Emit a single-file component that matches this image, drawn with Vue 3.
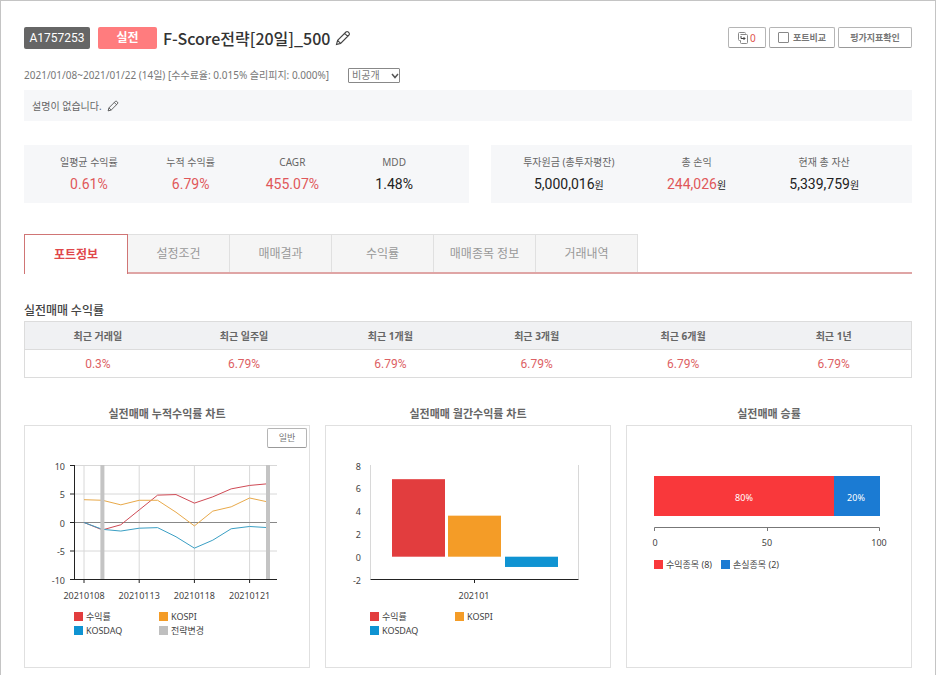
<script setup>
import { ref } from 'vue'

const visibility = ref('비공개')
const compare = ref(false)
const activeTab = ref(0)

const profitStats = [
  { label: '일평균 수익률', value: '0.61%', up: true },
  { label: '누적 수익률', value: '6.79%', up: true },
  { label: 'CAGR', value: '455.07%', up: true },
  { label: 'MDD', value: '1.48%' },
]

const assetStats = [
  { label: '투자원금 (총투자평잔)', value: '5,000,016' },
  { label: '총 손익', value: '244,026', up: true },
  { label: '현재 총 자산', value: '5,339,759' },
]

const tabs = ['포트정보', '설정조건', '매매결과', '수익률', '매매종목 정보', '거래내역']

const periods = [
  { label: '최근 거래일', value: '0.3%' },
  { label: '최근 일주일', value: '6.79%' },
  { label: '최근 1개월', value: '6.79%' },
  { label: '최근 3개월', value: '6.79%' },
  { label: '최근 6개월', value: '6.79%' },
  { label: '최근 1년', value: '6.79%' },
]

// line chart
const lineX = (i) => 59 + i * 18.4
const lineY = (v) => 96.5 - v * 5.7
const toPoints = (values) => values.map((v, i) => `${lineX(i)},${lineY(v)}`).join(' ')

const lines = [
  { color: '#cf4a55', values: [0, -1.3, -0.4, 2.2, 4.8, 4.9, 3.4, 4.5, 5.9, 6.5, 6.8] },
  { color: '#e8a94a', values: [4, 3.9, 3.1, 3.9, 3.9, 1.8, -0.6, 2, 2.75, 4.3, 3.6] },
  { color: '#3a9fc4', values: [0, -1.2, -1.5, -1, -0.9, -2.5, -4.5, -3.1, -1.1, -0.7, -0.9] },
]
const lineTicks = [10, 5, 0, -5, -10]
const dates = [
  { index: 0, text: '20210108' },
  { index: 3, text: '20210113' },
  { index: 6, text: '20210118' },
  { index: 9, text: '20210121' },
]
const changes = [1, 10]
const lineLegend = [
  { x: 49, y: 186, color: '#e23d3e', text: '수익률' },
  { x: 134, y: 186, color: '#f49c27', text: 'KOSPI' },
  { x: 49, y: 200, color: '#0f93d2', text: 'KOSDAQ' },
  { x: 134, y: 200, color: '#bfbfbf', text: '전략변경' },
]

// monthly bar chart
const barY = (v) => 130.7 - v * 11.4
const barTicks = [8, 6, 4, 2, 0, -2]
const bars = [
  { x: 66, value: 6.8, color: '#e23d3e' },
  { x: 122, value: 3.6, color: '#f49c27' },
  { x: 179, value: -0.9, color: '#0f93d2' },
]
const barLegend = [
  { x: 44, y: 186, color: '#e23d3e', text: '수익률' },
  { x: 129, y: 186, color: '#f49c27', text: 'KOSPI' },
  { x: 44, y: 200, color: '#0f93d2', text: 'KOSDAQ' },
]

const winLegend = [
  { x: 27, y: 134, color: '#f9383b', text: '수익종목 (8)' },
  { x: 94, y: 134, color: '#1b7bd3', text: '손실종목 (2)' },
]
</script>


<template>
  <main class="page">
    <header class="head">
      <span class="badge code">A1757253</span>
      <span class="badge real">실전</span>
      <h1>F-Score전략[20일]_500</h1>
      <button class="edit" type="button" aria-label="이름 수정">
        <svg width="16" height="16" viewBox="0 0 16 16">
          <path d="M1.5 14.5 2.6 10.4 11 2Q12 1 13.2 2L14 2.8Q15 4 14 5L5.6 13.4ZM2.6 10.4 5.6 13.4M9.7 3.3 12.7 6.3" />
        </svg>
      </button>
      <div class="actions">
        <button class="btn copy" type="button">
          <svg width="10" height="12" viewBox="0 0 10 12">
            <path d="M2.5 8.5H1.5Q.5 8.5 .5 7.5V1.5Q.5 .5 1.5 .5H6.5Q7.5 .5 7.5 1.5" />
            <path d="M2.5 8.5V10.5Q2.5 11.5 3.5 11.5H8.5Q9.5 11.5 9.5 10.5V3.5Q9.5 2.5 8.5 2.5H2.5" />
            <path class="arrow" d="M3 4V6.5H7M5.5 5 7 6.5 5.5 8" />
          </svg>
          <span class="count">0</span>
        </button>
        <label class="btn">
          <input v-model="compare" type="checkbox">
          <span>포트비교</span>
        </label>
        <button class="btn wide" type="button">평가지표확인</button>
      </div>
    </header>

    <div class="meta">
      <p>2021/01/08~2021/01/22 (14일) [수수료율: 0.015% 슬리피지: 0.000%]</p>
      <div class="select">
        <select v-model="visibility" aria-label="공개 여부">
          <option>비공개</option>
          <option>공개</option>
        </select>
        <svg width="8" height="6" viewBox="0 0 8 6"><path d="M1 1 4 4.5 7 1" /></svg>
      </div>
    </div>

    <div class="desc">
      <p>설명이 없습니다.</p>
      <button class="edit" type="button" aria-label="설명 수정">
        <svg width="12" height="12" viewBox="0 0 16 16">
          <path d="M1.5 14.5 2.6 10.4 11 2Q12 1 13.2 2L14 2.8Q15 4 14 5L5.6 13.4ZM2.6 10.4 5.6 13.4M9.7 3.3 12.7 6.3" />
        </svg>
      </button>
    </div>

    <section class="summary">
      <dl class="stats">
        <div v-for="item in profitStats" :key="item.label">
          <dt>{{ item.label }}</dt>
          <dd :class="{ up: item.up }">{{ item.value }}</dd>
        </div>
      </dl>
      <dl class="stats">
        <div v-for="item in assetStats" :key="item.label">
          <dt>{{ item.label }}</dt>
          <dd :class="{ up: item.up }">{{ item.value }}<small>원</small></dd>
        </div>
      </dl>
    </section>

    <nav class="tabs">
      <button
        v-for="(tab, i) in tabs"
        :key="tab"
        type="button"
        :class="{ active: activeTab === i }"
        @click="activeTab = i"
      >{{ tab }}</button>
    </nav>

    <section>
      <h2>실전매매 수익률</h2>
      <table>
        <thead>
          <tr>
            <th v-for="item in periods" :key="item.label" scope="col">{{ item.label }}</th>
          </tr>
        </thead>
        <tbody>
          <tr>
            <td v-for="item in periods" :key="item.label">{{ item.value }}</td>
          </tr>
        </tbody>
      </table>
    </section>

    <section class="charts">
      <div class="chart">
        <h3>실전매매 누적수익률 차트</h3>
        <div class="card">
          <button class="btn mode" type="button">일반</button>
          <svg viewBox="0 0 284 241">
            <g class="grid">
              <path v-for="v in [10, 5, -5]" :key="v" :d="`M50 ${lineY(v)}H252`" />
              <path v-for="d in dates" :key="d.text" :d="`M${lineX(d.index)} 39V153`" />
            </g>
            <path class="zero" d="M50 96.5H252" />
            <polyline
              v-for="line in lines"
              :key="line.color"
              class="line"
              :points="toPoints(line.values)"
              :stroke="line.color"
            />
            <rect v-for="i in changes" :key="i" class="change" :x="lineX(i) - 2" y="39" width="4" height="115" />
            <path class="axis" d="M49.5 39V153.5H252" />
            <path v-for="v in lineTicks" :key="v" class="axis" :d="`M45 ${lineY(v)}H50`" />
            <path v-for="d in dates" :key="d.text" class="axis" :d="`M${lineX(d.index)} 153V157`" />
            <text v-for="v in lineTicks" :key="v" class="end" x="40" :y="lineY(v) + 4">{{ v }}</text>
            <text v-for="d in dates" :key="d.text" class="mid" :x="lineX(d.index)" y="173">{{ d.text }}</text>
            <g v-for="item in lineLegend" :key="item.text">
              <rect :x="item.x" :y="item.y" width="9" height="9" :fill="item.color" />
              <text :x="item.x + 12" :y="item.y + 8">{{ item.text }}</text>
            </g>
          </svg>
        </div>
      </div>

      <div class="chart">
        <h3>실전매매 월간수익률 차트</h3>
        <div class="card">
          <svg viewBox="0 0 284 241">
            <path class="grid" d="M44.5 39V153M252.5 39V153" />
            <rect
              v-for="bar in bars"
              :key="bar.x"
              :x="bar.x"
              :y="barY(Math.max(bar.value, 0))"
              width="53"
              :height="Math.abs(bar.value) * 11.4"
              :fill="bar.color"
            />
            <path class="axis" d="M44.5 153.5H252.5M148.5 153V157" />
            <text v-for="v in barTicks" :key="v" class="end" x="35" :y="barY(v) + 4">{{ v }}</text>
            <text class="mid" x="148" y="173">202101</text>
            <g v-for="item in barLegend" :key="item.text">
              <rect :x="item.x" :y="item.y" width="9" height="9" :fill="item.color" />
              <text :x="item.x + 12" :y="item.y + 8">{{ item.text }}</text>
            </g>
          </svg>
        </div>
      </div>

      <div class="chart">
        <h3>실전매매 승률</h3>
        <div class="card">
          <svg viewBox="0 0 284 241">
            <rect x="27" y="50" width="180" height="40" fill="#f9383b" />
            <rect x="207" y="50" width="46" height="40" fill="#1b7bd3" />
            <text class="mid inner" x="117" y="75">80%</text>
            <text class="mid inner" x="229" y="75">20%</text>
            <path class="scale" d="M27.5 105V101.5H252.5V105M140.5 101V105" />
            <text class="mid" x="28" y="120">0</text>
            <text class="mid" x="140" y="120">50</text>
            <text class="mid" x="252" y="120">100</text>
            <g v-for="item in winLegend" :key="item.text">
              <rect :x="item.x" :y="item.y" width="9" height="9" :fill="item.color" />
              <text :x="item.x + 12" :y="item.y + 8">{{ item.text }}</text>
            </g>
          </svg>
        </div>
      </div>
    </section>
  </main>
</template>


<style>
body {
  margin: 0;
  background: white;
}
</style>

<style scoped>
* {
  box-sizing: border-box;
}

.page {
  min-height: 100vh;
  padding: 26px 23px 7px;
  border: 1px solid #c4c4c4;
  border-bottom: 0;
  color: #666;
  font-family: "Noto Sans", "Noto Sans CJK KR", sans-serif;
  font-size: 10px;
  line-height: 16px;
}

h1,
h2,
h3,
p,
dl,
dd {
  margin: 0;
}

button,
select {
  font: inherit;
  color: inherit;
}

.head {
  display: flex;
  align-items: center;
  height: 22px;
}

.badge {
  display: flex;
  align-items: center;
  justify-content: center;
  height: 22px;
  margin-right: 8px;
  border-radius: 2px;
  color: white;
}

.code {
  width: 66px;
  background: #666;
  font-family: Roboto, sans-serif;
  font-size: 12px;
}

.real {
  width: 59px;
  margin-right: 6px;
  background: #ff7c7e;
  font-size: 12px;
  font-weight: 700;
}

h1 {
  color: #333;
  font-family: "Noto Sans CJK KR", sans-serif;
  font-size: 16px;
  font-weight: 500;
  line-height: 20px;
}

.edit {
  display: flex;
  margin-left: 5px;
  padding: 0;
  border: 0;
  background: none;
}

.edit path {
  fill: none;
  stroke: #444;
  stroke-width: 1.1;
}

.actions {
  display: flex;
  align-self: flex-start;
  gap: 3px;
  margin-left: auto;
}

.btn {
  display: flex;
  align-items: center;
  justify-content: center;
  gap: 4px;
  height: 21px;
  padding: 0 8px;
  border: 1px solid #b5b5b5;
  border-bottom-color: #999;
  border-radius: 2px;
  background: white;
  color: #777;
  font-size: 9px;
  font-weight: 700;
}

.copy {
  width: 38px;
  gap: 2px;
}

.copy path {
  fill: none;
  stroke: #888;
}

.copy .arrow {
  stroke: #444;
}

.count {
  color: #e0524f;
  font-size: 10px;
  font-weight: 400;
}

.btn input {
  appearance: none;
  width: 11px;
  height: 11px;
  margin: 0;
  border: 1px solid #888;
  border-radius: 1px;
}

.btn input:checked {
  background: #888;
}

.wide {
  width: 74px;
}

.meta {
  display: flex;
  align-items: center;
  gap: 19px;
  height: 16px;
  margin-top: 18px;
  color: #777;
}

.select {
  position: relative;
}

select {
  display: block;
  appearance: none;
  width: 52px;
  height: 15px;
  padding: 0 3px;
  border: 1px solid #888;
  border-radius: 1px;
  background: white;
  line-height: 13px;
}

.select svg {
  position: absolute;
  top: 5px;
  right: 1px;
  pointer-events: none;
}

.select path {
  fill: none;
  stroke: #555;
  stroke-width: 1.5;
}

.desc {
  display: flex;
  align-items: center;
  height: 31px;
  margin-top: 7px;
  padding: 0 8px;
  background: #f6f7f9;
}

.summary {
  display: grid;
  grid-template-columns: 445fr 421fr;
  gap: 22px;
  margin-top: 24px;
}

.stats {
  display: flex;
  padding: 9px 24px 8px 14px;
  background: #f6f7f9;
  text-align: center;
}

.stats div {
  flex: 1;
}

.stats dd {
  margin-top: 3px;
  color: #222;
  font-family: Roboto, "Noto Sans CJK KR", sans-serif;
  font-size: 14px;
  line-height: 22px;
}

.stats small {
  font-size: 10px;
  line-height: 16px;
}

.stats .up {
  color: #e0575a;
}

.up small {
  color: #222;
}

.tabs {
  display: flex;
  height: 40px;
  margin-top: 31px;
  border-bottom: 2px solid #dfa5a5;
}

.tabs button {
  width: 102px;
  height: 38px;
  padding: 0;
  border: 1px solid #e0e0e0;
  border-width: 1px 1px 0 0;
  background: #f5f5f5;
  color: #999;
  font-size: 12px;
}

.tabs .active {
  width: 104px;
  height: 40px;
  border: 1px solid #d07575;
  border-bottom: 0;
  background: white;
  color: #e0474b;
  font-weight: 700;
}

h2 {
  margin-top: 27px;
  color: #444;
  font-family: "Noto Sans CJK KR", sans-serif;
  font-size: 12px;
  font-weight: 500;
  line-height: 18px;
}

table {
  width: 100%;
  margin-top: 2px;
  border: 1px solid #dcdcdc;
  border-collapse: collapse;
  table-layout: fixed;
}

th,
td {
  height: 28px;
  padding: 0;
  text-align: center;
}

th {
  background: #f0f1f3;
  border-bottom: 1px solid #dcdcdc;
  font-weight: 700;
}

th:last-child {
  width: 17.5%;
}

td {
  color: #dd6164;
  font-family: Roboto, sans-serif;
  font-size: 12px;
}

.charts {
  display: grid;
  grid-template-columns: repeat(3, 1fr);
  gap: 15px;
  margin-top: 27px;
}

h3 {
  color: #666;
  font-size: 11px;
  font-weight: 700;
  line-height: 18px;
  text-align: center;
}

.card {
  position: relative;
  margin-top: 2px;
  border: 1px solid #e0e0e0;
}

.card svg {
  display: block;
  width: 100%;
}

.mode {
  position: absolute;
  top: 2px;
  right: 2px;
  width: 40px;
  height: 20px;
  font-weight: 400;
}

text {
  fill: #444;
  font-size: 9px;
}

.mid {
  text-anchor: middle;
}

.end {
  text-anchor: end;
}

.inner {
  fill: white;
}

.grid {
  fill: none;
  stroke: #d8d8d8;
}

.zero {
  stroke: #888;
}

.line {
  fill: none;
}

.change {
  fill: #c4c4c4;
}

.axis {
  fill: none;
  stroke: #222;
}

.scale {
  fill: none;
  stroke: #777;
}
</style>
